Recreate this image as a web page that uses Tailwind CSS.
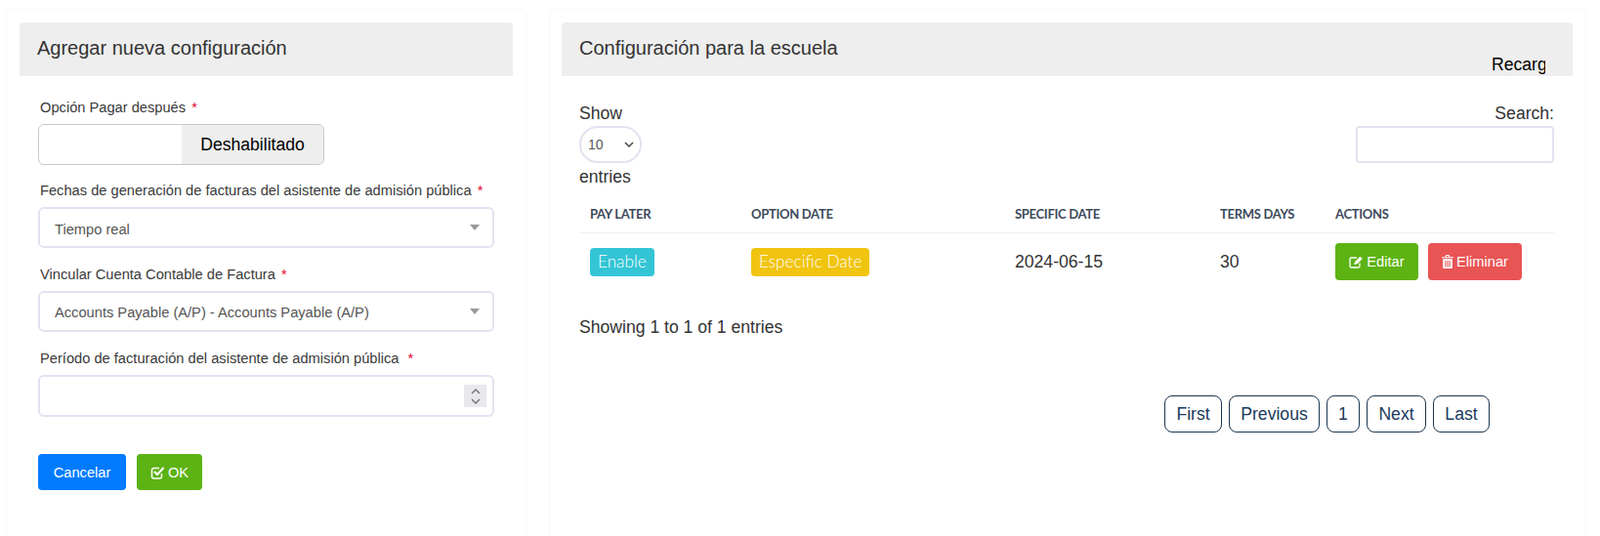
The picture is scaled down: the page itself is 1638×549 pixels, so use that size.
<!DOCTYPE html>
<html lang="es">
<head>
  <meta charset="UTF-8" />
  <meta name="viewport" content="width=device-width, initial-scale=1.0" />
  <title>Configuración</title>
  <script src="https://cdn.jsdelivr.net/npm/@tailwindcss/browser@4"></script>
</head>
<body class="bg-white h-[549px] overflow-hidden font-['Liberation_Sans',Arial,sans-serif] text-[#333]">
  <div class="flex pl-[6px] pt-[9px] gap-[23px]">

    <!-- left card -->
    <section class="w-[533px] h-[560px] shrink-0 rounded-md border border-[#f9f9f9] px-[13px] pt-[13px]">
      <div class="h-[55px] w-[505px] bg-[#eeeeee] rounded-t flex items-center pl-[18px] pb-[3px] text-[20px] text-[#333]">Agregar nueva configuración</div>

      <form class="pl-[19px] w-[486px]">
        <label class="block mt-[23px] pl-[2px] text-[14.67px] leading-[18px] text-[#3a3a3a]">Opción Pagar después <span class="text-[#e3002b] ml-[2px]">*</span></label>
        <div class="mt-[8px] w-[293px] h-[42px] flex rounded-md border border-[#c9c9c9] overflow-hidden">
          <div class="w-[146px]"></div>
          <div class="flex-1 bg-[#eeeeee] flex items-center justify-center text-[17.6px] text-black">Deshabilitado</div>
        </div>

        <label class="block mt-[17px] pl-[2px] text-[14.67px] leading-[18px] text-[#3a3a3a]">Fechas de generación de facturas del asistente de admisión pública <span class="text-[#e3002b] ml-[2px]">*</span></label>
        <div class="mt-[8px] h-[42px] flex items-center justify-between rounded-md border-2 border-[#e0e3f0] pl-[15px] pr-[13px] text-[14.67px] text-[#555]">
          <span class="pt-[3px]">Tiempo real</span>
          <span class="w-0 h-0 border-x-[5.5px] border-x-transparent border-t-[6px] border-t-[#999]"></span>
        </div>

        <label class="block mt-[18px] pl-[2px] text-[14.67px] leading-[18px] text-[#3a3a3a]">Vincular Cuenta Contable de Factura <span class="text-[#e3002b] ml-[2px]">*</span></label>
        <div class="mt-[8px] h-[42px] flex items-center justify-between rounded-md border-2 border-[#e0e3f0] pl-[15px] pr-[13px] text-[14.67px] text-[#555]">
          <span class="pt-[2px]">Accounts Payable (A/P) - Accounts Payable (A/P)</span>
          <span class="w-0 h-0 border-x-[5.5px] border-x-transparent border-t-[6px] border-t-[#999]"></span>
        </div>

        <label class="block mt-[18px] pl-[2px] text-[14.67px] leading-[18px] text-[#3a3a3a]">Período de facturación del asistente de admisión pública <span class="text-[#e3002b] ml-[5px]">*</span></label>
        <div class="mt-[8px] h-[43px] flex items-center justify-end rounded-md border-2 border-[#e0e3f0] pr-[6px]">
          <span class="w-[23px] h-[23px] bg-[#e9e9ed] flex items-center justify-center">
            <svg width="12" height="18" viewBox="0 0 12 18" fill="none" stroke="#777" stroke-width="1.5"><path d="M2 6l4-4 4 4M2 12l4 4 4-4"/></svg>
          </span>
        </div>

        <div class="mt-[38px] flex gap-[11px]">
          <button type="button" class="w-[90px] h-[37px] rounded bg-[#007bff] text-white text-[14.67px]">Cancelar</button>
          <button type="button" class="w-[67px] h-[37px] rounded bg-[#5cb313] text-white text-[14.67px] flex items-center justify-center gap-[3px]">
            <svg width="15" height="14" viewBox="0 0 15 14" fill="none" stroke="white"><path d="M11.5 8v3a2 2 0 0 1-2 2h-6a2 2 0 0 1-2-2V4.500a2 2 0 0 1 2-2H9" stroke-width="1.5"/><path d="M4 6l3 3 6.500-7" stroke-width="2.200"/></svg>
            OK
          </button>
        </div>
      </form>
    </section>

    <!-- right card -->
    <section class="w-[1062px] h-[560px] shrink-0 rounded-md border border-[#f9f9f9] pl-[12px] pt-[13px]">
      <div class="relative h-[55px] w-[1035px] bg-[#eeeeee] rounded-t flex items-center pl-[18px] pb-[3px] text-[20px] text-[#333]">
        Configuración para la escuela
        <span class="absolute left-[952px] top-[31px] w-[55px] h-[24px] overflow-hidden whitespace-nowrap text-[17.6px] leading-[25px] text-black">Recargar</span>
      </div>

      <div class="pl-[18px] pr-[19px] w-[1035px]">
        <div class="mt-[28px] flex justify-between h-[95px] text-[17.6px] text-[#333]">
          <div>
            <div class="leading-[20px]">Show</div>
            <div class="relative mt-[3px] w-[64px] h-[38px]">
              <select class="block w-full h-full appearance-none rounded-full border-2 border-[#e0e3f0] pl-[7px] text-sm text-[#555] bg-white">
                <option>10</option>
              </select>
              <svg class="absolute right-[8px] top-[16px]" width="10" height="7" viewBox="0 0 10 7" fill="none" stroke="#444" stroke-width="1.500"><path d="M1 1l4 4 4-4"/></svg>
            </div>
            <div class="mt-[4px] leading-[20px]">entries</div>
          </div>
          <div class="flex flex-col items-end">
            <div class="leading-[20px]">Search:</div>
            <input type="text" class="mt-[3px] w-[203px] h-[38px] rounded border-2 border-[#e0e3f0]" />
          </div>
        </div>

        <table class="w-[998px] table-fixed border-collapse">
          <thead>
            <tr class="border-b border-[#f0f0f0] h-[37px] font-['Lato',sans-serif] text-[13px] text-[#3d4a5c] tracking-[-0.3px] text-left">
              <th class="w-[176px] pl-[11px] font-bold">PAY LATER</th>
              <th class="w-[270px] font-bold">OPTION DATE</th>
              <th class="w-[210px] font-bold">SPECIFIC DATE</th>
              <th class="w-[118px] font-bold">TERMS DAYS</th>
              <th class="font-bold">ACTIONS</th>
            </tr>
          </thead>
          <tbody>
            <tr class="h-[60px] text-[17.6px] text-[#333]">
              <td class="pl-[11px]"><span class="inline-flex items-center h-[29px] px-[8px] rounded bg-[#33c5d5] text-white font-['Lato',sans-serif] font-light text-[17.2px]">Enable</span></td>
              <td><span class="inline-flex items-center h-[29px] px-[8px] rounded bg-[#f1c40f] text-white font-['Lato',sans-serif] font-light text-[17.2px]">Especific Date</span></td>
              <td>2024-06-15</td>
              <td>30</td>
              <td>
                <div class="flex gap-[10px]">
                  <button class="w-[85px] h-[38px] rounded bg-[#5cb313] text-white text-[14.67px] flex items-center justify-center gap-[3px]">
                    <svg width="15" height="13" viewBox="0 0 15 13" fill="none" stroke="white"><path d="M11 7.500v3a1.500 1.500 0 0 1-1.500 1.500h-7A1.500 1.500 0 0 1 1 10.500v-7A1.500 1.500 0 0 1 2.500 2H8" stroke-width="1.300"/><path d="M5.500 8.500l1-2.500 5-5 2 2-5 5z" fill="white" stroke-width=".6"/></svg>
                    Editar
                  </button>
                  <button class="w-[96px] h-[38px] rounded bg-[#e95454] text-white text-[14.67px] flex items-center justify-center gap-[3px]">
                    <svg width="12" height="14" viewBox="0 0 11 13" fill="white"><path d="M3.500 2V1a1 1 0 0 1 1-1h2a1 1 0 0 1 1 1v1H11v1H0V2zM4.500 1v1h2V1zM1 4h9v8a1 1 0 0 1-1 1H2a1 1 0 0 1-1-1zm2 1.500v6h1v-6zm2 0v6h1v-6zm2 0v6h1v-6z" fill-rule="evenodd"/></svg>
                    Eliminar
                  </button>
                </div>
              </td>
            </tr>
          </tbody>
        </table>

        <p class="mt-[25px] text-[17.6px] leading-[24px] text-[#333]">Showing 1 to 1 of 1 entries</p>

        <nav class="mt-[58px] ml-[599px] flex gap-[7px] text-[17.6px] text-[#1a3a5c]">
          <a class="w-[59px] h-[38px] flex items-center justify-center rounded-lg border border-[#1b3650]">First</a>
          <a class="w-[93px] h-[38px] flex items-center justify-center rounded-lg border border-[#1b3650]">Previous</a>
          <a class="w-[34px] h-[38px] flex items-center justify-center rounded-lg border border-[#1b3650]">1</a>
          <a class="w-[61px] h-[38px] flex items-center justify-center rounded-lg border border-[#1b3650]">Next</a>
          <a class="w-[58px] h-[38px] flex items-center justify-center rounded-lg border border-[#1b3650]">Last</a>
        </nav>
      </div>
    </section>
  </div>
</body>
</html>
